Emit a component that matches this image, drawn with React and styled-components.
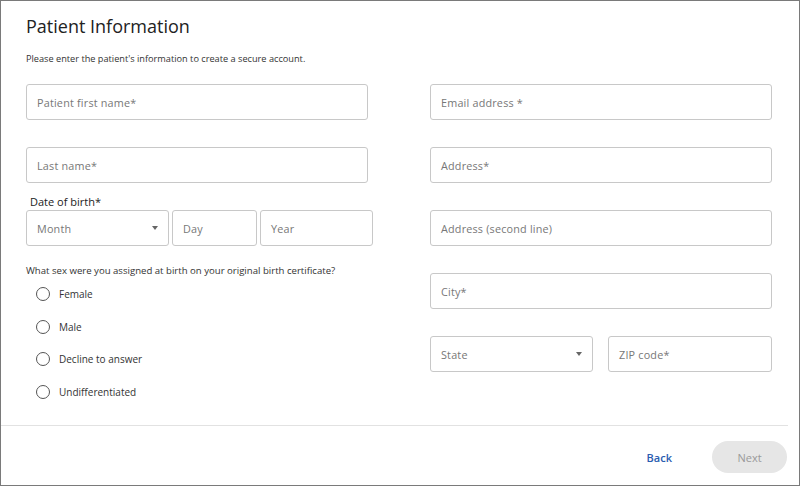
import React from "react";
import styled, { createGlobalStyle } from "styled-components";

const G = createGlobalStyle`
  *{box-sizing:border-box;}
  body{margin:0;font-family:"Open Sans",sans-serif;background:#fff;}
`;
const Frame = styled.div`width:800px;height:486px;border:1px solid #7a7a7a;display:flex;flex-direction:column;overflow:hidden;`;
const Body = styled.div`padding:14px 28px 0 25px;flex:1;`;
const Title = styled.h1`margin:0;font-size:18px;font-weight:400;color:#222;line-height:22px;`;
const Sub = styled.p`margin:15px 0 19px;font-size:9.2px;color:#333;line-height:13px;`;
const Cols = styled.div`display:grid;grid-template-columns:342px 342px;column-gap:62px;`;
const Col = styled.div`display:flex;flex-direction:column;`;
const Field = styled.div`flex-shrink:0;height:36px;border:1px solid #c8c8c8;border-radius:3px;display:flex;align-items:center;justify-content:space-between;padding:0 10px;font-size:10.8px;color:#777;letter-spacing:.2px;width:${p=>p.w||"100%"};margin-bottom:${p=>p.mb??27}px;`;
const Caret = styled.span`width:0;height:0;border-left:3.5px solid transparent;border-right:3.5px solid transparent;border-top:4px solid #666;`;
const Label = styled.div`font-size:11px;color:#222;margin:0 0 1px 4px;line-height:14px;`;
const Row = styled.div`display:flex;gap:${p=>p.gap||3}px;`;
const Question = styled.div`font-size:9.6px;color:#333;margin:19px 0 10px;line-height:12px;white-space:nowrap;`;
const Radio = styled.label`display:flex;align-items:center;gap:9px;font-size:10px;color:#333;height:14px;margin:0 0 18.5px 10px;`;
const Circle = styled.span`width:14px;height:14px;border:1px solid #555;border-radius:50%;`;
const Divider = styled.div`height:1px;background:#e2e2e2;margin:0 11px 0 0;`;
const Footer = styled.div`display:flex;justify-content:flex-end;align-items:center;gap:40px;padding:15px 12px 12px 0;`;
const Back = styled.span`color:#2a5db0;font-size:11px;font-weight:600;`;
const Next = styled.span`width:75px;height:32px;border-radius:16px;background:#e6e6e6;color:#999;font-size:11px;display:flex;align-items:center;justify-content:center;`;

export default function App(){
  return (<><G/><Frame><Body>
    <Title>Patient Information</Title>
    <Sub>Please enter the patient's information to create a secure account.</Sub>
    <Cols>
      <Col>
        <Field>Patient first name*</Field>
        <Field mb={12}>Last name*</Field>
        <Label>Date of birth*</Label>
        <Row>
          <Field w="143px" mb={0}>Month<Caret/></Field>
          <Field w="85px" mb={0}>Day</Field>
          <Field w="113px" mb={0}>Year</Field>
        </Row>
        <Question>What sex were you assigned at birth on your original birth certificate?</Question>
        {["Female","Male","Decline to answer","Undifferentiated"].map(t=><Radio key={t}><Circle/>{t}</Radio>)}
      </Col>
      <Col>
        <Field>Email address *</Field>
        <Field>Address*</Field>
        <Field>Address (second line)</Field>
        <Field>City*</Field>
        <Row gap={15}>
          <Field w="163px" mb={0}>State<Caret/></Field>
          <Field w="164px" mb={0}>ZIP code*</Field>
        </Row>
      </Col>
    </Cols>
  </Body>
  <Divider/>
  <Footer><Back>Back</Back><Next>Next</Next></Footer>
  </Frame></>);
}
